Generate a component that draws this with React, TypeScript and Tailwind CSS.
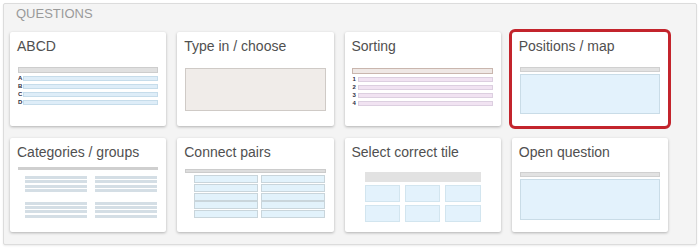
const font = { fontFamily: '"Liberation Sans", Arial, sans-serif' };

function Card({ title, selected, children }: { title: string; selected?: boolean; children: React.ReactNode }) {
	return (
		<div
			className={
				'h-[94px] bg-white rounded-[2px] shadow-[0_1px_3px_rgba(0,0,0,0.28)] flex flex-col' +
				(selected ? ' outline-[3px] outline-solid outline-[#c3242c] rounded-[3px]' : '')
			}>
			<div className="h-[28px] pt-[6px] pl-[7px] text-[14px] leading-[16px] text-[#505050]">{title}</div>
			{children}
		</div>
	);
}

function ListRows({ labels, bar, border }: { labels: string[]; bar: string; border: string }) {
	return (
		<div className="mt-[3px] flex flex-col gap-[3px] pl-[8px] pr-[8px]">
			{labels.map((l) => (
				<div key={l} className="flex items-center h-[5px]">
					<span className="w-[5px] text-[6px] leading-[5px] font-bold text-[#2b2b40]">{l}</span>
					<div className={'flex-1 h-[5px] border ' + bar + ' ' + border} />
				</div>
			))}
		</div>
	);
}

function Lines() {
	return (
		<div className="flex flex-col gap-[1.3px]">
			{[0, 1, 2, 3].map((i) => (
				<div key={i} className="h-[3px] bg-[#d4dee5]" />
			))}
		</div>
	);
}

export default function App() {
	return (
		<div className="w-[700px] h-[249px] bg-white pt-[3px] pl-[3px]" style={font}>
			<div className="w-[694px] h-[242px] border border-[#dcdcdc] bg-[#f4f4f4] rounded-[2px] shadow-[0_1px_2px_rgba(0,0,0,0.08)]">
				<div className="pl-[12px] h-[20px] text-[13px] leading-[20px] text-[#9a9a9a]">QUESTIONS</div>
				<div className="mt-[8px] ml-[6px] w-[658px] grid grid-cols-4 gap-x-[11px] gap-y-[12px]">
					<Card title="ABCD">
						<div className="mt-[7px] mx-[8px] h-[6px] bg-[#e0e0e0] border border-[#cdcdcd]" />
						<ListRows labels={['A', 'B', 'C', 'D']} bar="bg-[#deedf8]" border="border-[#c6dcea]" />
					</Card>
					<Card title="Type in / choose">
						<div className="mt-[8px] mx-[8px] h-[43px] bg-[#f0ece9] border border-[#cfcac6]" />
					</Card>
					<Card title="Sorting">
						<div className="mt-[8px] ml-[7px] mr-[8px] h-[6px] bg-[#efe8e5] border border-[#c9b6ae]" />
						<ListRows labels={['1', '2', '3', '4']} bar="bg-[#f1e3f2]" border="border-[#dccfe0]" />
					</Card>
					<Card title="Positions / map" selected>
						<div className="mt-[7px] mx-[8px] h-[5px] bg-[#e2e2e2] border border-[#d0d0d0]" />
						<div className="mt-[2px] mx-[8px] h-[40px] bg-[#e3f2fc] border border-[#c9dce7]" />
					</Card>

					<Card title="Categories / groups">
						<div className="mt-[1px] mx-[8px] h-[3px] bg-[#cfcfcf]" />
						<div className="mt-[6px] ml-[15px] mr-[9px] grid grid-cols-2 gap-x-[8px] gap-y-[10px]">
							<Lines />
							<Lines />
							<Lines />
							<Lines />
						</div>
					</Card>
					<Card title="Connect pairs">
						<div className="mt-[3px] mx-[8px] h-[4px] bg-[#dddddd] border border-[#cccccc]" />
						<div className="mt-[2px] ml-[17px] mr-[9px] grid grid-cols-2 gap-x-[3px] gap-y-[0.75px]">
							{Array.from({ length: 10 }).map((_, i) => (
								<div key={i} className="h-[8px] bg-[#e2f2fb] border border-[#c9d5db]" />
							))}
						</div>
					</Card>
					<Card title="Select correct tile">
						<div className="mt-[6px] mx-[20px] h-[10px] bg-[#e2e2e2]" />
						<div className="mt-[3px] mx-[20px] grid grid-cols-3 gap-x-[5px] gap-y-[3px]">
							{Array.from({ length: 6 }).map((_, i) => (
								<div key={i} className="h-[17px] bg-[#e3f2fc] border border-[#d2e5ef]" />
							))}
						</div>
					</Card>
					<Card title="Open question">
						<div className="mt-[6px] mx-[8px] h-[5px] bg-[#e2e2e2] border border-[#d0d0d0]" />
						<div className="mt-[2px] mx-[8px] h-[41px] bg-[#e3f2fc] border border-[#c9dce7]" />
					</Card>
				</div>
			</div>
		</div>
	);
}
